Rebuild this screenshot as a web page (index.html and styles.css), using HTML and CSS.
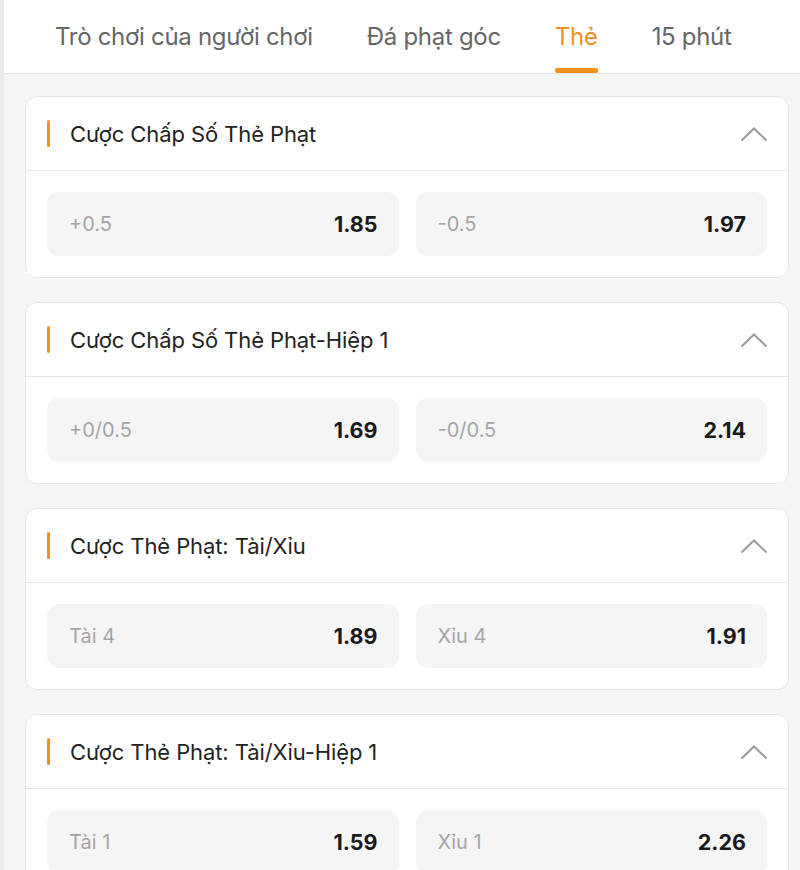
FILE: index.html
```html
<!DOCTYPE html>
<html lang="vi">
<head>
<meta charset="utf-8">
<link rel="stylesheet" href="styles.css">
</head>
<body>
<div class="page">
  <nav class="tabs">
    <div class="tab">Trò chơi của người chơi</div>
    <div class="tab">Đá phạt góc</div>
    <div class="tab active">Thẻ</div>
    <div class="tab">15 phút</div>
  </nav>
  <main class="list">
    <section class="card">
      <header class="card-head">
        <span class="bar"></span>
        <h2 class="title">Cược Chấp Số Thẻ Phạt</h2>
        <svg class="chev" width="28" height="16" viewBox="0 0 28 16"><polyline points="1.5,14.5 14,2.5 26.5,14.5" fill="none" stroke="#9a9a9a" stroke-width="2"/></svg>
      </header>
      <div class="card-body">
        <div class="odd"><span class="lbl">+0.5</span><span class="val">1.85</span></div>
        <div class="odd"><span class="lbl">-0.5</span><span class="val">1.97</span></div>
      </div>
    </section>
    <section class="card">
      <header class="card-head">
        <span class="bar"></span>
        <h2 class="title">Cược Chấp Số Thẻ Phạt-Hiệp 1</h2>
        <svg class="chev" width="28" height="16" viewBox="0 0 28 16"><polyline points="1.5,14.5 14,2.5 26.5,14.5" fill="none" stroke="#9a9a9a" stroke-width="2"/></svg>
      </header>
      <div class="card-body">
        <div class="odd"><span class="lbl">+0/0.5</span><span class="val">1.69</span></div>
        <div class="odd"><span class="lbl">-0/0.5</span><span class="val">2.14</span></div>
      </div>
    </section>
    <section class="card">
      <header class="card-head">
        <span class="bar"></span>
        <h2 class="title">Cược Thẻ Phạt: Tài/Xỉu</h2>
        <svg class="chev" width="28" height="16" viewBox="0 0 28 16"><polyline points="1.5,14.5 14,2.5 26.5,14.5" fill="none" stroke="#9a9a9a" stroke-width="2"/></svg>
      </header>
      <div class="card-body">
        <div class="odd"><span class="lbl">Tài 4</span><span class="val">1.89</span></div>
        <div class="odd"><span class="lbl">Xỉu 4</span><span class="val">1.91</span></div>
      </div>
    </section>
    <section class="card">
      <header class="card-head">
        <span class="bar"></span>
        <h2 class="title">Cược Thẻ Phạt: Tài/Xỉu-Hiệp 1</h2>
        <svg class="chev" width="28" height="16" viewBox="0 0 28 16"><polyline points="1.5,14.5 14,2.5 26.5,14.5" fill="none" stroke="#9a9a9a" stroke-width="2"/></svg>
      </header>
      <div class="card-body">
        <div class="odd"><span class="lbl">Tài 1</span><span class="val">1.59</span></div>
        <div class="odd"><span class="lbl">Xỉu 1</span><span class="val">2.26</span></div>
      </div>
    </section>
  </main>
</div>
</body>
</html>
```
FILE: styles.css
```css
* { box-sizing: border-box; }
html, body { margin: 0; padding: 0; }
body {
  font-family: Inter, "Noto Sans", sans-serif;
  background: #f5f6f6;
  height: 870px;
  overflow: hidden;
}
.page {
  border-left: 4px solid #e9eaea;
  min-height: 870px;
  background: #f5f6f6;
}
.tabs {
  display: flex;
  gap: 54px;
  background: #fff;
  height: 74px;
  padding-left: 51px;
  border-bottom: 1px solid #e6e6e6;
}
.tab {
  position: relative;
  font-size: 24px;
  color: #666;
  line-height: 74px;
  letter-spacing: -0.3px;
}
.tab.active { color: #f39019; }
.tab.active::after {
  content: "";
  position: absolute;
  left: 0; right: 0;
  bottom: 0;
  height: 5px;
  border-radius: 2px;
  background: #f39019;
}
.list {
  padding: 22px 11px 0 21px;
  display: flex;
  flex-direction: column;
  gap: 24px;
}
.card {
  background: #fff;
  border: 1px solid #e6e7e7;
  border-radius: 12px;
}
.card-head {
  height: 74px;
  display: flex;
  align-items: center;
  padding: 0 20px 0 21px;
  border-bottom: 1px solid #e8e8e8;
}
.bar {
  width: 3px;
  height: 27px;
  border-radius: 2px;
  background: #f39019;
}
.title {
  margin: 0 0 0 20px;
  font-size: 22px;
  font-weight: 400;
  color: #222;
  flex: 1;
  letter-spacing: -0.1px;
}
.chev { display: block; }
.card-body {
  display: grid;
  grid-template-columns: 1fr 1fr;
  gap: 17px;
  padding: 21px 21px 21px 21px;
}
.odd {
  height: 64px;
  border-radius: 12px;
  background: #f5f5f5;
  display: flex;
  align-items: center;
  justify-content: space-between;
  padding: 0 21px 0 22px;
  font-size: 20px;
}
.lbl { color: #a5a5a5; }
.val { color: #1a1a1a; font-weight: 700; font-size: 21.5px; }
```
